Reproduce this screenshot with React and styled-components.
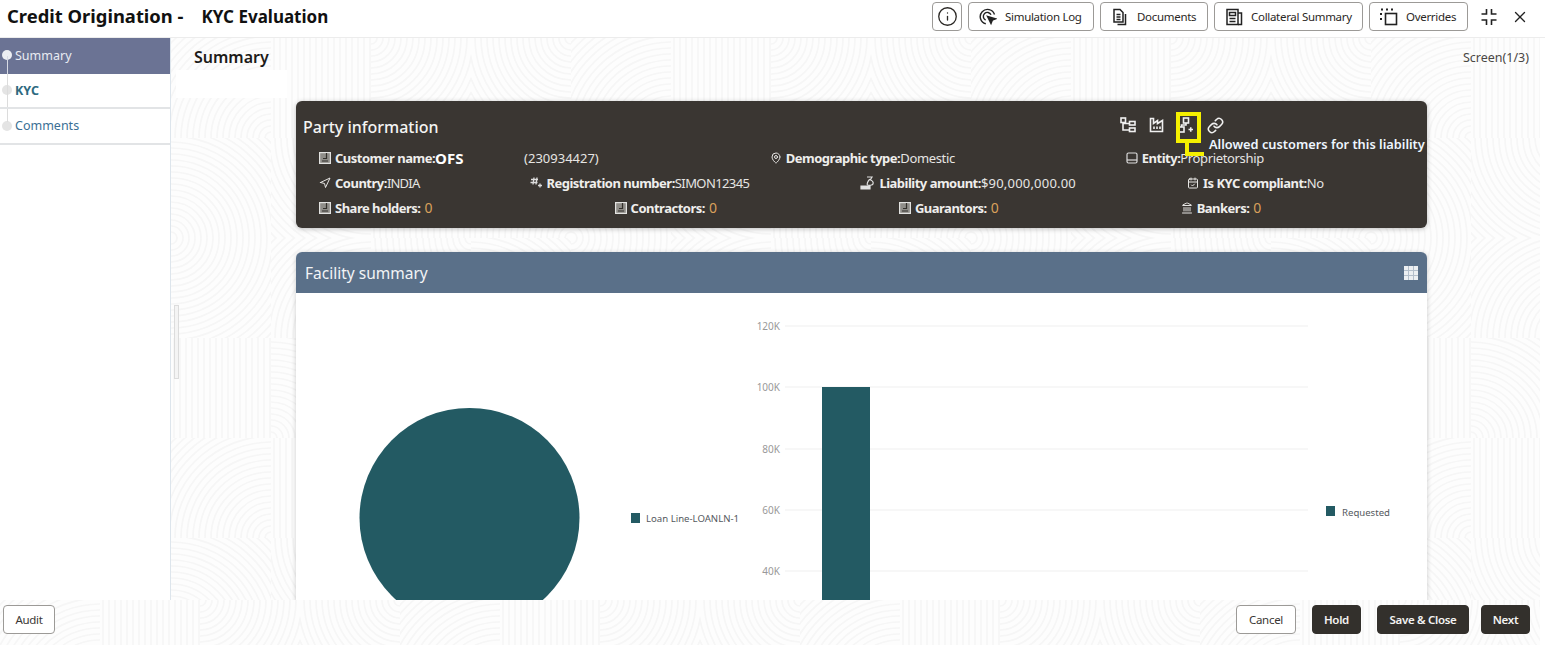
import React from "react";
import styled, { createGlobalStyle } from "styled-components";
import { Info, X, MapPin, Navigation, Landmark, CalendarCheck, Link } from "lucide-react";

const GlobalStyle = createGlobalStyle`
  html, body {
    margin: 0;
    padding: 0;
    background: #fff;
  }
  body {
    font-family: "Noto Sans", "Open Sans", sans-serif;
  }
`;

// swirl wallpaper: a 400px tile of 100px cells, each with arcs round one corner
const cellKinds = [3, 4, 0, 1, 2, 1, 4, 3, 0, 3, 1, 2, 4, 2, 3, 0];

const buildCell = (kind, i) => {
  const x = (i % 4) * 100;
  const y = Math.floor(i / 4) * 100;
  let marks = "";
  if (kind === 4) {
    for (let v = 3; v < 100; v += 6) marks += `<path d="M${v} 0v100"/>`;
  } else {
    const cx = kind & 1 ? 100 : 0;
    const cy = kind & 2 ? 100 : 0;
    for (let r = 6; r < 150; r += 6) marks += `<circle cx="${cx}" cy="${cy}" r="${r}"/>`;
  }
  return `<svg x="${x}" y="${y}" width="100" height="100">${marks}</svg>`;
};

const tile = `<svg xmlns="http://www.w3.org/2000/svg" width="400" height="400" fill="none" stroke="#f6f6f6" stroke-width="1.7">${cellKinds
  .map(buildCell)
  .join("")}</svg>`;

const patternBg = `url("data:image/svg+xml,${encodeURIComponent(tile)}")`;

const SimulationIcon = () => (
  <svg width="18" height="18" viewBox="0 0 18 18" fill="none" stroke="#222" strokeWidth="1.4">
    <path d="M15.500 6.500A7.300 7.300 0 1 0 6.800 15.800" />
    <path d="M12 6.800A4 4 0 1 0 6.600 12" />
    <path d="M8.500 8.500l8 2.400-3.200 1.300-1.300 3.300z" fill="#222" />
  </svg>
);

const DocumentsIcon = () => (
  <svg width="18" height="18" viewBox="0 0 18 18" fill="none" stroke="#222" strokeWidth="1.5">
    <path d="M3 1.500h6l3 3v9.500H3z" />
    <path d="M5.500 6.500h4M5.500 9h4M5.500 11.500h4" />
    <path d="M14.500 6v10.500H6.500" />
  </svg>
);

const CollateralIcon = () => (
  <svg width="18" height="18" viewBox="0 0 18 18" fill="none" stroke="#222" strokeWidth="1.5">
    <rect x="2" y="1.500" width="11" height="15" />
    <path d="M13 5h3.500v11.500H13M4.500 4.500h6v3h-6zM4.500 10.500h6M4.500 13.500h6" />
  </svg>
);

const OverridesIcon = () => (
  <svg width="18" height="18" viewBox="0 0 18 18" fill="none" stroke="#222" strokeWidth="1.600">
    <rect x="5.500" y="5.500" width="11" height="11" />
    <path d="M1 1.500h2M6 1.500h2M11 1.500h2M1 5v2M1 10v2" strokeWidth="2" />
  </svg>
);

const CollapseIcon = () => (
  <svg width="18" height="18" viewBox="0 0 18 18" fill="none" stroke="#222" strokeWidth="1.600">
    <path d="M6.500 1v5H1.500M11.500 1v5H16.500M1.500 12h5v5M16.500 12h-5v5" />
  </svg>
);

const BookIcon = () => (
  <svg width="12" height="12" viewBox="0 0 12 12" fill="none" stroke="#e2e2e0" strokeWidth="1.200">
    <rect x="0.600" y="0.600" width="10.800" height="10.800" fill="#8f8d88" />
    <path d="M7.500 1v5.500H4M3 9h6" stroke="#33302c" />
  </svg>
);

const HashIcon = () => (
  <svg width="12" height="12" viewBox="0 0 12 12" fill="none" stroke="#ddd" strokeWidth="1.300">
    <path d="M4 0.500L3 7.500M7 0.500L6 7.500M1 2.500h7M0.500 5.500h7M10 6.500v4M8 8.500h4" />
  </svg>
);

const MoneyIcon = () => (
  <svg width="15" height="14" viewBox="0 0 15 14" fill="none" stroke="#e0e0e0" strokeWidth="1.200">
    <path d="M7 1h5l-1.500 2.500M9.500 3.500c3 1 4 3 3.500 4.500-.5 1.500-4 1.500-5.500 1-1-1 .5-4 2-5.500z" />
    <path d="M1 10h9v3H1z" fill="#e0e0e0" />
  </svg>
);

const EntityIcon = () => (
  <svg width="12" height="12" viewBox="0 0 12 12" fill="none" stroke="#ddd" strokeWidth="1.200">
    <rect x="1" y="1" width="10" height="10" rx="1.500" />
    <path d="M1 8h10" />
  </svg>
);

const TreeIcon = () => (
  <svg width="16" height="16" viewBox="0 0 16 16" fill="none" stroke="#f0f0f0" strokeWidth="1.600">
    <rect x="1" y="1" width="4.500" height="4.500" />
    <rect x="9.500" y="4.500" width="5.500" height="3.500" />
    <rect x="9.500" y="11" width="5.500" height="3.500" />
    <path d="M3 5.500v7.500h6.500M3 6.500h6.500" />
  </svg>
);

const FactoryIcon = () => (
  <svg width="16" height="16" viewBox="0 0 16 16" fill="none" stroke="#f0f0f0" strokeWidth="1.600">
    <path d="M1.500 14.500V1.500h3v5l4-3v3l5-3v11z" />
    <path d="M5 9.500v2.500M8 9.500v2.500M11 9.500v2.500" />
  </svg>
);

const CustomerTreeIcon = () => (
  <svg width="16" height="16" viewBox="0 0 16 16" fill="none" stroke="#f0f0f0" strokeWidth="1.600">
    <rect x="5.500" y="1" width="5" height="5" />
    <rect x="1" y="10" width="5" height="5" />
    <path d="M8 6v2H3.500v2M10.500 12.500h4.500M12.750 10.250v4.500" />
  </svg>
);

const Page = styled.div`
  position: relative;
  width: 1545px;
  height: 654px;
  overflow: hidden;
  display: flex;
  flex-direction: column;
  background: #fff;
`;

const TopBar = styled.header`
  height: 38px;
  flex: none;
  box-sizing: border-box;
  border-bottom: 1px solid #ececec;
  display: flex;
  align-items: flex-start;
  padding: 2px 16px 0 7px;
`;

const Title = styled.h1`
  margin: 2px 0 0;
  font-size: 18.400px;
  line-height: 24px;
  font-weight: 700;
  color: #111;
  white-space: nowrap;
`;

const SubTitle = styled(Title)`
  margin: 3px auto 0 18px;
  font-size: 17px;
`;

const TopButtons = styled.div`
  display: flex;
  align-items: center;
  gap: 6px;
`;

const TopButton = styled.button`
  height: 29px;
  width: ${(p) => p.$width}px;
  box-sizing: border-box;
  border: 1px solid #9c9a97;
  border-radius: 4px;
  background: #fff;
  color: #2b2825;
  padding: 0 0 0 10px;
  display: flex;
  align-items: center;
  gap: 8px;
  font-family: inherit;
  font-size: 11.500px;
  letter-spacing: -0.3px;
  white-space: nowrap;
`;

const InfoButton = styled(TopButton)`
  justify-content: center;
  padding: 0;
`;

const WindowButtons = styled.div`
  display: flex;
  align-items: center;
  gap: 13px;
  height: 29px;
  margin-left: 12px;
  color: #222;
`;

const Body = styled.div`
  height: 562px;
  flex: none;
  display: flex;
  overflow: hidden;
  padding-right: 5px;
`;

const Sidebar = styled.nav`
  width: 171px;
  flex: none;
  box-sizing: border-box;
  background: #fff;
  border-right: 1px solid #dde5ec;
`;

const Step = styled.div`
  position: relative;
  height: 35.500px;
  box-sizing: border-box;
  padding: 0 0 ${(p) => (p.$active ? 1 : 0)}px 15px;
  display: flex;
  align-items: center;
  font-size: 12.500px;
  background: ${(p) => (p.$active ? "#6b7394" : "#fff")};
  color: ${(p) => (p.$active ? "#e9ebf2" : p.$bold ? "#2e6a80" : "#3a6f94")};
  font-weight: ${(p) => (p.$bold ? 700 : 400)};
  border-bottom: ${(p) => (p.$active ? "none" : "2px solid #e2e4e6")};

  &::before {
    content: "";
    position: absolute;
    left: 2px;
    top: 50%;
    width: 10px;
    height: 10px;
    margin-top: ${(p) => (p.$active ? -6 : -5)}px;
    border-radius: 50%;
    background: ${(p) => (p.$active ? "#eceef2" : "#e4e4e4")};
  }
  &::after {
    content: "";
    position: absolute;
    left: 6.500px;
    top: ${(p) => (p.$active ? "50%" : "0")};
    height: ${(p) => (p.$last ? "40%" : p.$active ? "50%" : "100%")};
    width: 1px;
    background: ${(p) => (p.$active ? "#d7dae4" : "#dcdcdc")};
  }
`;

const Main = styled.main`
  position: relative;
  flex: 1;
  min-width: 0;
  overflow: hidden;
  background-color: #fdfdfd;
  background-image: ${patternBg};
`;

const MainHead = styled.div`
  display: flex;
  justify-content: space-between;
  align-items: center;
  height: 38px;
  padding: 0 11px 0 23px;
`;

const MainTitle = styled.h2`
  margin: 0;
  font-size: 16px;
  font-weight: 600;
  color: #1d1b19;
`;

const ScreenCount = styled.span`
  font-size: 12.500px;
  color: #4a4744;
`;

const Blank = styled.div`
  position: absolute;
  left: 5px;
  top: 32px;
  width: 111px;
  height: 28px;
  background: #fff;
`;

const Splitter = styled.div`
  position: absolute;
  left: 3px;
  top: 267px;
  width: 5px;
  height: 74px;
  box-sizing: border-box;
  border: 1px solid #dcdcdc;
  background: #f4f4f4;
`;

const Content = styled.div`
  width: 1131px;
  margin: 25px 0 0 125px;
  display: flex;
  flex-direction: column;
  gap: 24px;
`;

const PartyCard = styled.section`
  position: relative;
  height: 127px;
  box-sizing: border-box;
  border-radius: 6px;
  background: #3a3632;
  box-shadow: 0 1px 5px rgba(0, 0, 0, 0.25);
  color: #e6e5e3;
  padding-top: 14px;
`;

const PartyHead = styled.div`
  display: flex;
  align-items: center;
  justify-content: space-between;
  padding: 0 203px 0 7px;
  height: 24px;
`;

const PartyTitle = styled.h3`
  margin: 0;
  font-size: 16px;
  font-weight: 500;
  color: #f4f4f3;
`;

const ActionIcons = styled.div`
  display: flex;
  align-items: center;
  gap: 13px;
  margin-top: -4px;
`;

const Rows = styled.div`
  margin-top: 6px;
  padding-left: 23px;
  display: flex;
  flex-direction: column;
`;

const Row = styled.div`
  display: flex;
  align-items: center;
  height: 25px;
  gap: ${(p) => p.$gap}px;
`;

const Field = styled.div`
  display: flex;
  align-items: center;
  font-size: 13px;
  line-height: 14px;
  white-space: nowrap;

  > svg {
    margin-right: 4px;
  }
`;

const Label = styled.b`
  font-weight: 700;
  color: #efeeec;
  letter-spacing: -0.5px;
`;

const Value = styled.span`
  letter-spacing: ${(p) => p.$spacing ?? -0.35}px;
`;

const Count = styled.span`
  font-size: 14px;
  color: #d9a05b;
  margin-left: 4px;
`;

const CustomerName = styled.span`
  font-size: 15px;
  font-weight: 700;
  color: #fff;
  width: 89px;
`;

const Highlight = styled.div`
  position: absolute;
  left: 880px;
  top: 11px;
  width: 25px;
  height: 31px;
  box-sizing: border-box;
  border: 4px solid #f5f000;

  &::after {
    content: "";
    position: absolute;
    left: 5px;
    top: 27px;
    width: 19px;
    height: 13px;
    box-sizing: border-box;
    border-left: 4px solid #f5f000;
    border-bottom: 4px solid #f5f000;
  }
`;

const Callout = styled.span`
  position: absolute;
  left: 913px;
  top: 37px;
  font-size: 12.800px;
  line-height: 13px;
  font-weight: 600;
  color: #eef6ff;
  white-space: nowrap;
`;

const FacilityCard = styled.section`
  background: #fff;
  border-radius: 6px 6px 0 0;
  box-shadow: 0 1px 5px rgba(0, 0, 0, 0.2);
`;

const FacilityHead = styled.div`
  height: 41px;
  border-radius: 6px 6px 0 0;
  background: #5a7089;
  display: flex;
  align-items: center;
  justify-content: space-between;
  padding: 0 9px;
  color: #f2f4f6;
  font-size: 15.500px;
`;

const GridIcon = styled.div`
  width: 14px;
  height: 14px;
  display: grid;
  grid-template-columns: repeat(3, 1fr);
  gap: 1px;
  background: #b4bfcb;
`;

const GridCell = styled.span`
  background: #eceff2;
`;

const Charts = styled.div`
  display: flex;
  height: 400px;
`;

const ChartText = styled.text`
  font-size: 9.600px;
  fill: #55595e;
  font-family: "Noto Sans", sans-serif;
`;

const AxisText = styled.text`
  font-size: 10px;
  fill: #999;
  font-family: "Noto Sans", sans-serif;
  text-anchor: end;
`;

const Footer = styled.footer`
  height: 40px;
  flex: none;
  display: flex;
  align-items: flex-start;
  margin-right: 5px;
  padding: 5px 10px 0 3px;
  gap: 16px;
  background-color: #fdfdfd;
  background-image: ${patternBg};
`;

const FootButton = styled.button`
  height: 29px;
  width: ${(p) => p.$width}px;
  box-sizing: border-box;
  border-radius: 4px;
  border: 1px solid ${(p) => (p.$dark ? "#33302c" : "#9c9a97")};
  background: ${(p) => (p.$dark ? "#33302c" : "#fff")};
  color: ${(p) => (p.$dark ? "#f4f3f2" : "#3a3734")};
  font-family: inherit;
  font-size: 11.500px;
  font-weight: ${(p) => (p.$dark ? 600 : 400)};
  letter-spacing: -0.3px;
  padding: 0;
  margin-left: ${(p) => p.$shift || 0}px;

  &:nth-child(2) {
    margin-left: auto;
  }
`;

const gridLines = [
  { y: 33, label: "120K" },
  { y: 94, label: "100K" },
  { y: 156, label: "80K" },
  { y: 217, label: "60K" },
  { y: 278, label: "40K" },
];

const FacilityCharts = () => (
  <Charts>
    <svg width="454" height="400" viewBox="0 0 454 400">
      <circle cx="173.500" cy="225" r="110" fill="#235a63" />
      <rect x="335" y="220" width="9" height="10" fill="#235a63" />
      <ChartText x="350" y="229">Loan Line-LOANLN-1</ChartText>
    </svg>
    <svg width="677" height="400" viewBox="0 0 677 400">
      {gridLines.map((line) => (
        <g key={line.label}>
          <line x1="35" x2="558" y1={line.y} y2={line.y} stroke="#efefef" />
          <AxisText x="30" y={line.y + 4}>{line.label}</AxisText>
        </g>
      ))}
      <rect x="72" y="94" width="48" height="300" fill="#235a63" />
      <rect x="576" y="213" width="9" height="10" fill="#235a63" />
      <ChartText x="592" y="223">Requested</ChartText>
    </svg>
  </Charts>
);

const App = () => {
  return (
    <Page>
      <GlobalStyle />
      <TopBar>
        <Title>Credit Origination -</Title>
        <SubTitle>KYC Evaluation</SubTitle>
        <TopButtons>
          <InfoButton $width={30} aria-label="Info">
            <Info size={21} strokeWidth={1.5} />
          </InfoButton>
          <TopButton $width={126}><SimulationIcon />Simulation Log</TopButton>
          <TopButton $width={108}><DocumentsIcon />Documents</TopButton>
          <TopButton $width={149}><CollateralIcon />Collateral Summary</TopButton>
          <TopButton $width={99}><OverridesIcon />Overrides</TopButton>
        </TopButtons>
        <WindowButtons>
          <CollapseIcon />
          <X size={18} strokeWidth={1.8} />
        </WindowButtons>
      </TopBar>
      <Body>
        <Sidebar>
          <Step $active>Summary</Step>
          <Step $bold>KYC</Step>
          <Step $last>Comments</Step>
        </Sidebar>
        <Main>
          <Blank />
          <Splitter />
          <MainHead>
            <MainTitle>Summary</MainTitle>
            <ScreenCount>Screen(1/3)</ScreenCount>
          </MainHead>
          <Content>
            <PartyCard>
              <PartyHead>
                <PartyTitle>Party information</PartyTitle>
                <ActionIcons>
                  <TreeIcon />
                  <FactoryIcon />
                  <CustomerTreeIcon />
                  <Link size={17} color="#f0f0f0" strokeWidth={2.2} />
                </ActionIcons>
              </PartyHead>
              <Highlight />
              <Callout>Allowed customers for this liability</Callout>
              <Rows>
                <Row $gap={171}>
                  <Field>
                    <BookIcon />
                    <Label>Customer name:</Label>
                    <CustomerName>OFS</CustomerName>
                    <Value $spacing={0}>(230934427)</Value>
                  </Field>
                  <Field>
                    <MapPin size={12} />
                    <Label>Demographic type:</Label>
                    <Value>Domestic</Value>
                  </Field>
                  <Field>
                    <EntityIcon />
                    <Label>Entity:</Label>
                    <Value>Proprietorship</Value>
                  </Field>
                </Row>
                <Row $gap={111}>
                  <Field>
                    <Navigation size={12} />
                    <Label>Country:</Label>
                    <Value $spacing={-0.8}>INDIA</Value>
                  </Field>
                  <Field>
                    <HashIcon />
                    <Label>Registration number:</Label>
                    <Value $spacing={-0.6}>SIMON12345</Value>
                  </Field>
                  <Field>
                    <MoneyIcon />
                    <Label>Liability amount:</Label>
                    <Value $spacing={0.2}>$90,000,000.00</Value>
                  </Field>
                  <Field>
                    <CalendarCheck size={12} />
                    <Label>Is KYC compliant:</Label>
                    <Value>No</Value>
                  </Field>
                </Row>
                <Row $gap={182}>
                  <Field>
                    <BookIcon />
                    <Label>Share holders:</Label>
                    <Count>0</Count>
                  </Field>
                  <Field>
                    <BookIcon />
                    <Label>Contractors:</Label>
                    <Count>0</Count>
                  </Field>
                  <Field>
                    <BookIcon />
                    <Label>Guarantors:</Label>
                    <Count>0</Count>
                  </Field>
                  <Field>
                    <Landmark size={12} />
                    <Label>Bankers:</Label>
                    <Count>0</Count>
                  </Field>
                </Row>
              </Rows>
            </PartyCard>
            <FacilityCard>
              <FacilityHead>
                Facility summary
                <GridIcon>
                  {Array.from({ length: 9 }).map((_, i) => (
                    <GridCell key={i} />
                  ))}
                </GridIcon>
              </FacilityHead>
              <FacilityCharts />
            </FacilityCard>
          </Content>
        </Main>
      </Body>
      <Footer>
        <FootButton $width={52}>Audit</FootButton>
        <FootButton $width={60}>Cancel</FootButton>
        <FootButton $width={49} $dark>Hold</FootButton>
        <FootButton $width={92} $dark>Save &amp; Close</FootButton>
        <FootButton $width={49} $dark $shift={-4}>Next</FootButton>
      </Footer>
    </Page>
  );
};

export default App;
